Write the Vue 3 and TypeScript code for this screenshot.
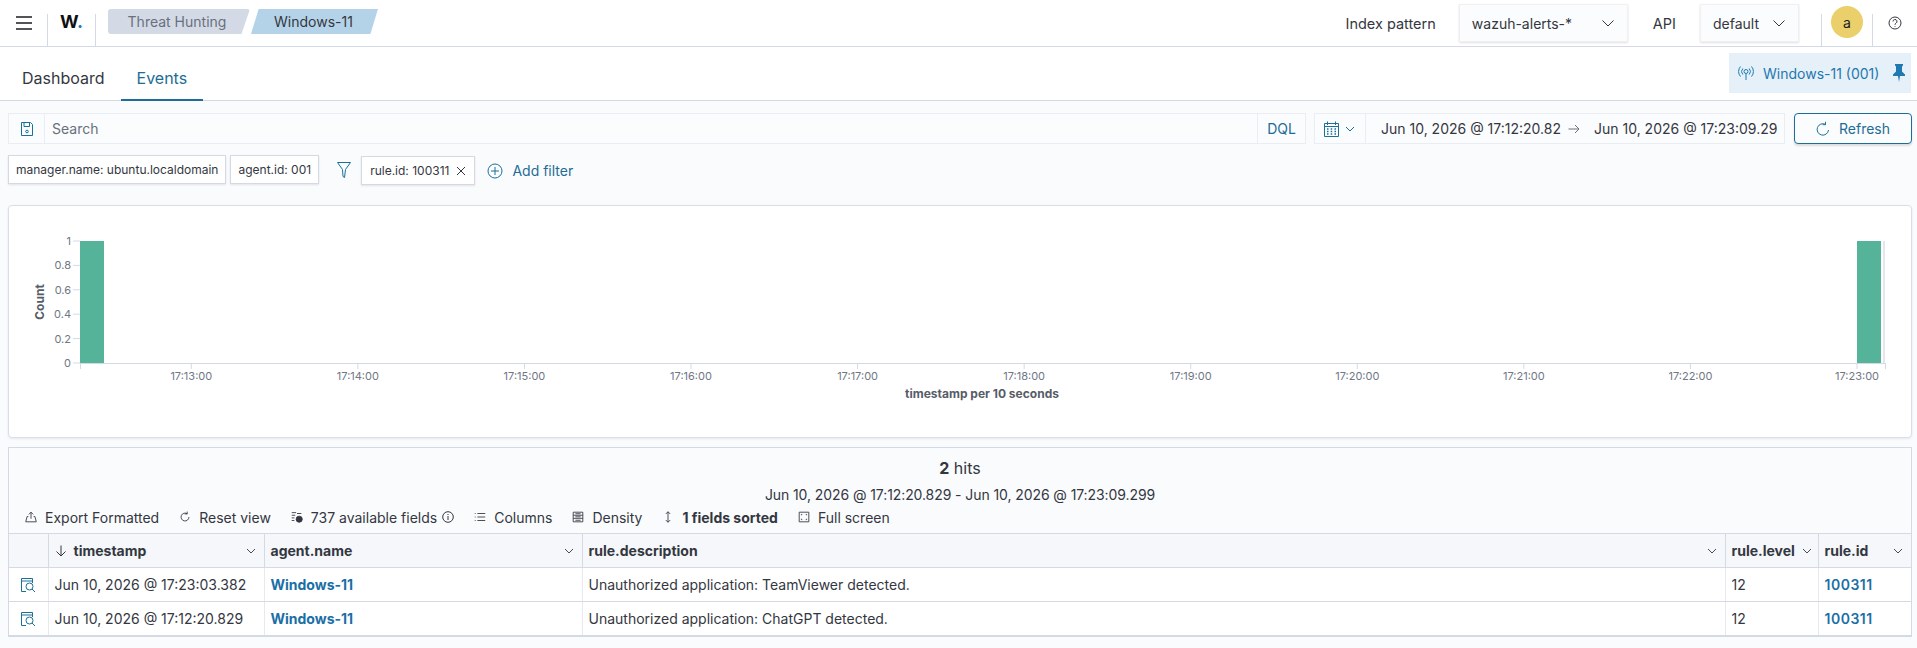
<script setup lang="ts">
const icons: Record<string, string> = {
  exportIcon: 'M8 10V2.500M5.500 5 8 2.500 10.500 5M5 7.500H3.500L2 13.500h12l-1.500-6H11',
  reset: 'M12.500 8a4.500 4.500 0 1 1-2-3.700M10.500 1.800v2.700h-2.700',
  fields: 'M2 3h5M2 6h4M2 9h3M2 12h3M8 4h5',
  columns: 'M5 4h9M5 8h9M5 12h9M2 4h1M2 8h1M2 12h1',
  density: 'M2.500 2.500h11v11h-11zM2.500 6h11M2.500 9.500h11M5 4.300h6M5 7.800h6M5 11.700h6',
  sort: 'M8 2v12M5.500 4.500 8 2l2.500 2.500M5.500 11.500 8 14l2.500-2.500',
  full: 'M2.500 2.500h11v11h-11zM5 5h1M10 5h1M5 11h1M10 11h1M5 5v1M11 5v1M5 10v1M11 10v1',
}

const toolbar = [
  { label: 'Export Formatted', icon: 'exportIcon' },
  { label: 'Reset view', icon: 'reset' },
  { label: '737 available fields', icon: 'fields', info: true },
  { label: 'Columns', icon: 'columns' },
  { label: 'Density', icon: 'density' },
  { label: '1 fields sorted', icon: 'sort', strong: true },
  { label: 'Full screen', icon: 'full' },
]

const columns = ['timestamp', 'agent.name', 'rule.description', 'rule.level', 'rule.id']

const rows = [
  { time: 'Jun 10, 2026 @ 17:23:03.382', agent: 'Windows-11', desc: 'Unauthorized application: TeamViewer detected.', level: 12, id: 100311 },
  { time: 'Jun 10, 2026 @ 17:12:20.829', agent: 'Windows-11', desc: 'Unauthorized application: ChatGPT detected.', level: 12, id: 100311 },
]

const xTicks = ['17:13:00', '17:14:00', '17:15:00', '17:16:00', '17:17:00', '17:18:00', '17:19:00', '17:20:00', '17:21:00', '17:22:00', '17:23:00']
  .map((label, i) => ({ label, x: 191.3 + i * 166.57 }))
const yTicks = ['1', '0.8', '0.6', '0.4', '0.2', '0'].map((label, i) => ({ label, y: 241 + i * 24.4 }))
</script>

<template>
  <div class="page">
    <header class="top">
      <button class="menu" aria-label="menu">
        <svg width="16" height="14" viewBox="0 0 16 14"><path d="M0 1h16M0 7h16M0 13h16" stroke="#1a1c21" stroke-width="1.500" /></svg>
      </button>
      <div class="logo"><span>W</span><i>.</i></div>
      <nav class="crumbs">
        <span class="crumb first">Threat Hunting</span>
        <span class="crumb second">Windows-11</span>
      </nav>
      <div class="top-right">
        <span class="top-label index-label">Index pattern</span>
        <div class="select index-select">
          <span>wazuh-alerts-*</span>
          <svg width="14" height="14" viewBox="0 0 14 14"><path d="M1.500 4.500 7 10l5.500-5.500" fill="none" stroke="#343741" stroke-width="1" /></svg>
        </div>
        <span class="top-label api-label">API</span>
        <div class="select api-select">
          <span>default</span>
          <svg width="14" height="14" viewBox="0 0 14 14"><path d="M1.500 4.500 7 10l5.500-5.500" fill="none" stroke="#343741" stroke-width="1" /></svg>
        </div>
        <div class="user-slot"><span class="avatar">a</span></div>
        <div class="help-slot">
          <svg width="14" height="14" viewBox="0 0 14 14" fill="none" stroke="#343741" stroke-width="1">
            <circle cx="7" cy="7" r="6" />
            <path d="M5 5.500a2 2 0 1 1 3 1.700c-.7.400-1 .8-1 1.600M7 10.300v.7" />
          </svg>
        </div>
      </div>
    </header>

    <div class="tabs">
      <a class="tab">Dashboard</a>
      <a class="tab active">Events</a>
      <div class="pinned">
        <svg width="18" height="16" viewBox="0 0 18 16" fill="none" stroke="#1f78b0" stroke-width="1">
          <circle cx="9" cy="6.500" r="2" />
          <path d="M9 8.500V15M5.800 3.500a4.500 4.500 0 0 0 0 6M12.200 3.500a4.500 4.500 0 0 1 0 6M3.500 1.500a7.500 7.500 0 0 0 0 10M14.500 1.500a7.500 7.500 0 0 1 0 10" />
        </svg>
        <span>Windows-11 (001)</span>
        <svg class="pin" width="12" height="18" viewBox="0 0 12 18"><path d="M2 0h8v1.500L9 2.500v5l3 3v1.500H7L6 18l-1-6H0v-1.500l3-3v-5l-1-1z" fill="#1f78b0" /></svg>
      </div>
    </div>

    <main class="content">
      <div class="query-row">
        <div class="search">
          <span class="save">
            <svg width="16" height="16" viewBox="0 0 16 16" fill="none" stroke="#1b7097" stroke-width="1">
              <path d="M2.500 1.500h9l2 2v11h-11z" />
              <path d="M5 1.500v4h5.500v-4" />
              <circle cx="8" cy="10.500" r="1.300" />
            </svg>
          </span>
          <span class="search-text">Search</span>
          <span class="dql">DQL</span>
        </div>
        <div class="dates">
          <span class="calendar">
            <svg width="15" height="16" viewBox="0 0 15 16" fill="none" stroke="#1b7097" stroke-width="1">
              <path d="M.5 2.500h14v13H.5zM.5 5.500h14M3.500 .5v3.500M11.500 .5v3.500" />
              <path d="M3 8h1.500M6.700 8h1.500M10.500 8H12M3 10.500h1.500M6.700 10.500h1.500M10.500 10.500H12M3 13h1.500M6.700 13h1.500M10.500 13H12" stroke-width="1.400" />
            </svg>
            <svg width="10" height="10" viewBox="0 0 10 10" fill="none" stroke="#1b7097"><path d="M1 3l4 4 4-4" /></svg>
          </span>
          <span class="date-text">Jun 10, 2026 @ 17:12:20.82</span>
          <svg class="date-arrow" width="12" height="10" viewBox="0 0 12 10" fill="none" stroke="#69707d"><path d="M.5 5h10.500M7 1l4 4-4 4" /></svg>
          <span class="date-text">Jun 10, 2026 @ 17:23:09.29</span>
        </div>
        <button class="refresh">
          <svg width="14" height="16" viewBox="0 0 14 16" fill="none" stroke="#1b7097" stroke-width="1">
            <path d="M12.500 9a5.700 5.700 0 1 1-3-5.600M9.500 .8v2.900H6.800" />
          </svg>
          <span>Refresh</span>
        </button>
      </div>

      <div class="filter-row">
        <span class="pill">manager.name: ubuntu.localdomain</span>
        <span class="pill">agent.id: 001</span>
        <svg class="funnel" width="14" height="16" viewBox="0 0 14 16" fill="none" stroke="#1b7097" stroke-width="1"><path d="M.5 .5h13L8.500 7.500l-1 8-1.500-1-.5-7z" /></svg>
        <span class="pill rule">rule.id: 100311
          <svg width="10" height="10" viewBox="0 0 10 10" stroke="#343741"><path d="M1 1l8 8M9 1 1 9" /></svg>
        </span>
        <a class="add-filter">
          <svg width="16" height="16" viewBox="0 0 16 16" fill="none" stroke="#1b7097" stroke-width="1"><circle cx="8" cy="8" r="7" /><path d="M8 4v8M4 8h8" /></svg>
          <span>Add filter</span>
        </a>
      </div>

      <section class="chart">
        <svg width="1904" height="233" viewBox="8 205 1904 233">
          <rect x="80" y="241" width="24" height="122" fill="#54b399" />
          <rect x="1857" y="241" width="24" height="122" fill="#54b399" />
          <rect x="1883" y="241" width="2" height="122" fill="#e3e6ec" />
          <path d="M80 363.500h1805" stroke="#d3dae6" />
          <path d="M80.500 363v6M1885.500 363v6" stroke="#d3dae6" />
          <g v-for="t in yTicks" :key="t.label">
            <path :d="`M73 ${t.y}h7`" stroke="#d3dae6" />
            <text class="tick" x="71" :y="t.y + 4" text-anchor="end">{{ t.label }}</text>
          </g>
          <g v-for="t in xTicks" :key="t.label">
            <path :d="`M${t.x} 363v6`" stroke="#d3dae6" />
            <text class="tick" :x="t.x" y="380" text-anchor="middle">{{ t.label }}</text>
          </g>
          <text class="axis-title" transform="translate(44 302) rotate(-90)" text-anchor="middle">Count</text>
          <text class="axis-title" x="982" y="398" text-anchor="middle">timestamp per 10 seconds</text>
        </svg>
      </section>

      <section class="results">
        <div class="hits"><b>2</b> hits</div>
        <div class="range">Jun 10, 2026 @ 17:12:20.829 - Jun 10, 2026 @ 17:23:09.299</div>
        <div class="toolbar">
          <span v-for="item in toolbar" :key="item.label" class="tool" :class="{ strong: item.strong }">
            <svg width="14" height="14" viewBox="0 0 16 16" fill="none" stroke="#343741" stroke-width="1"><path :d="icons[item.icon]" /><circle v-if="item.icon === 'fields'" cx="10.500" cy="10.500" r="3.500" fill="#343741" /></svg>
            {{ item.label }}
            <svg v-if="item.info" class="info" width="12" height="12" viewBox="0 0 12 12" fill="none" stroke="#343741"><circle cx="6" cy="6" r="5.300" /><path d="M6 5v4M6 3v1" /></svg>
          </span>
        </div>
        <table>
          <colgroup>
            <col style="width: 39px" />
            <col style="width: 216px" />
            <col style="width: 318px" />
            <col />
            <col style="width: 93px" />
            <col style="width: 93px" />
          </colgroup>
          <thead>
            <tr>
              <th></th>
              <th v-for="(col, i) in columns" :key="col">
                <div class="th-inner">
                  <svg v-if="i === 0" width="12" height="12" viewBox="0 0 12 12" fill="none" stroke="#343741"><path d="M6 .5V11M1.500 6.500 6 11l4.500-4.500" /></svg>
                  <span>{{ col }}</span>
                  <svg class="chev" width="10" height="10" viewBox="0 0 10 10" fill="none" stroke="#343741" stroke-width=".9"><path d="M1 3l4 4 4-4" /></svg>
                </div>
              </th>
            </tr>
          </thead>
          <tbody>
            <tr v-for="row in rows" :key="row.time">
              <td class="inspect">
                <svg width="16" height="16" viewBox="0 0 16 16" fill="none" stroke="#1b7097" stroke-width="1">
                  <path d="M6 14.500H1.500V1.500h11V6" />
                  <path d="M1.500 4h11" stroke-dasharray="1 1" stroke-width="2" />
                  <circle cx="9.500" cy="9.500" r="3.500" />
                  <path d="M12 12l3 3" />
                </svg>
              </td>
              <td>{{ row.time }}</td>
              <td><a class="link bold">{{ row.agent }}</a></td>
              <td>{{ row.desc }}</td>
              <td>{{ row.level }}</td>
              <td><a class="link semi">{{ row.id }}</a></td>
            </tr>
          </tbody>
        </table>
      </section>
    </main>
  </div>
</template>

<style>
html, body {
  margin: 0;
  background: #fafbfd;
}
</style>

<style scoped>
.page {
  width: 1917px;
  height: 648px;
  overflow: hidden;
  font-family: Inter, "Liberation Sans", sans-serif;
  font-size: 14px;
  color: #343741;
  background: #fafbfd;
}

.top {
  height: 46px;
  display: flex;
  align-items: stretch;
  background: #fff;
  border-bottom: 1px solid #d3dae6;
}

.menu {
  width: 47px;
  padding: 0;
  border: none;
  background: none;
  display: flex;
  align-items: center;
  justify-content: center;
}

.logo {
  width: 47px;
  margin-top: 14px;
  border-left: 1px solid #d3dae6;
  border-right: 1px solid #d3dae6;
  text-align: center;
  font-size: 18px;
  font-weight: 700;
  line-height: 16px;
  color: #0f1012;
}

.logo i {
  color: #1f78c8;
  font-style: normal;
}

.crumbs {
  display: flex;
  margin: 9px 0 0 12px;
  height: 25px;
}

.crumb {
  display: flex;
  align-items: center;
  justify-content: center;
  font-size: 14px;
}

.first {
  width: 142px;
  padding-right: 4px;
  box-sizing: border-box;
  background: #d3dae6;
  color: #69707d;
  border-radius: 3px;
  clip-path: polygon(0 0, 100% 0, 94% 100%, 0 100%);
}

.second {
  width: 127px;
  padding-right: 2px;
  box-sizing: border-box;
  margin-left: 1px;
  background: #b4d3e8;
  color: #343741;
  clip-path: polygon(6% 0, 100% 0, 94% 100%, 0 100%);
}

.top-right {
  margin-left: auto;
  display: flex;
  align-items: center;
}

.top-label {
  font-size: 14.500px;
}

.index-label {
  margin-right: 23px;
}

.api-label {
  margin: 0 24px 0 25px;
}

.select {
  height: 38px;
  box-sizing: border-box;
  display: flex;
  align-items: center;
  justify-content: space-between;
  padding: 0 12px;
  background: #fbfcfd;
  border: 1px solid #eef0f4;
  box-shadow: 0 1px 2px rgba(0, 0, 0, .12);
}

.index-select {
  width: 169px;
}

.api-select {
  width: 99px;
}

.user-slot {
  width: 50px;
  height: 32px;
  margin-top: 14px;
  margin-left: 22px;
  border-left: 1px solid #d3dae6;
  border-right: 1px solid #d3dae6;
  display: flex;
  justify-content: center;
}

.avatar {
  width: 32px;
  height: 32px;
  margin-top: -8px;
  border-radius: 50%;
  background: #ebcf6a;
  color: #1a1c21;
  display: flex;
  align-items: center;
  justify-content: center;
}

.help-slot {
  width: 44px;
  display: flex;
  justify-content: center;
}

.help-slot svg {
  align-self: center;
}

.tabs {
  height: 53px;
  display: flex;
  align-items: stretch;
  padding-left: 6px;
  background: #fff;
  border-bottom: 1px solid #d3dae6;
}

.tab {
  padding: 0 16px;
  line-height: 62px;
  font-size: 16px;
  color: #343741;
}

.active {
  color: #1d6d96;
  border-bottom: 2px solid #1d6d96;
  height: 52px;
}

.pinned {
  margin: 6px 6px 6px auto;
  width: 182px;
  height: 40px;
  padding: 0 6px 0 8px;
  box-sizing: border-box;
  display: flex;
  align-items: center;
  gap: 8px;
  background: #e6f0f8;
  color: #1f78b0;
}

.pin {
  margin-left: auto;
}

.content {
  padding: 12px 5px 0 8px;
}

.query-row {
  display: flex;
  gap: 8px;
  height: 31px;
}

.search,
.dates {
  display: flex;
  align-items: center;
  box-sizing: border-box;
  background: #fbfcfd;
  border: 1px solid #eaedf3;
}

.search {
  flex: 1;
}

.save {
  width: 35px;
  height: 100%;
  border-right: 1px solid #eaedf3;
  display: flex;
  align-items: center;
  justify-content: center;
}

.search-text {
  margin-left: 7px;
  color: #69707d;
}

.dql {
  margin-left: auto;
  height: 100%;
  width: 47px;
  border-left: 1px solid #eaedf3;
  display: flex;
  align-items: center;
  justify-content: center;
  color: #1d6d96;
}

.dates {
  width: 471px;
  margin-right: 1px;
  white-space: nowrap;
}

.calendar {
  width: 51px;
  height: 100%;
  box-sizing: border-box;
  padding-left: 9px;
  border-right: 1px solid #eaedf3;
  display: flex;
  align-items: center;
  gap: 6px;
  flex-shrink: 0;
}

.date-text {
  margin-left: 15px;
}

.date-arrow {
  margin-left: 7px;
  margin-right: -1px;
}

.refresh {
  width: 118px;
  padding: 0;
  font: inherit;
  display: flex;
  align-items: center;
  justify-content: center;
  gap: 9px;
  color: #1d6d96;
  background: #fbfcfd;
  border: 1px solid #1d6d96;
  border-radius: 4px;
  box-shadow: 0 2px 2px rgba(0, 0, 0, .12);
}

.filter-row {
  display: flex;
  align-items: flex-start;
  margin-top: 11px;
  height: 30px;
  font-size: 12px;
}

.pill {
  height: 29px;
  padding: 0 7px;
  display: flex;
  align-items: center;
  box-sizing: border-box;
  margin-right: 4px;
  background: #fff;
  border: 1px solid #d3dae6;
  box-shadow: 0 1px 2px rgba(0, 0, 0, .1);
  white-space: nowrap;
}

.funnel {
  margin: 7px 10px 0 14px;
}

.rule {
  margin-top: 1px;
  padding: 0 8px;
  gap: 7px;
}

.add-filter {
  margin-left: 8px;
  margin-top: 7px;
  display: flex;
  align-items: center;
  gap: 9px;
  color: #1d6d96;
  font-size: 14px;
}

.chart {
  margin-top: 20px;
  height: 233px;
  box-sizing: border-box;
  background: #fff;
  border: 1px solid #d9dee8;
  border-radius: 4px;
  box-shadow: 0 1px 3px rgba(0, 0, 0, .08);
  overflow: hidden;
}

.chart svg {
  display: block;
  margin: -1px;
}

.tick {
  font-size: 11px;
  fill: #6f7785;
}

.axis-title {
  font-size: 12px;
  font-weight: 700;
  fill: #565c68;
}

.results {
  margin-top: 9px;
  border: 1px solid #d3dae6;
  background: #fafbfd;
}

.hits {
  margin-top: 10px;
  line-height: 20px;
  text-align: center;
  font-size: 16px;
}

.range {
  margin-top: 7px;
  line-height: 20px;
  text-align: center;
  letter-spacing: -.085px;
}

.toolbar {
  display: flex;
  align-items: center;
  height: 20px;
  margin-top: 2px;
  margin-bottom: 6px;
  padding-left: 15px;
  gap: 19px;
}

.tool {
  display: flex;
  align-items: center;
  gap: 7px;
  white-space: nowrap;
}

.tool .info {
  margin-left: -2px;
}

.strong {
  font-weight: 700;
}

table {
  width: 100%;
  table-layout: fixed;
  border-collapse: collapse;
  background: #fff;
}

th,
td {
  height: 34px;
  padding: 0 0 0 6px;
  box-sizing: border-box;
  border-left: 1px solid #e6e9f0;
  border-bottom: 1px solid #d3dae6;
  text-align: left;
}

th:first-child,
td:first-child {
  border-left: none;
}

thead tr {
  background: #f5f7fa;
  border-top: 1px solid #d3dae6;
}

th {
  border-left-color: #d3dae6;
}

.th-inner {
  display: flex;
  align-items: center;
  gap: 7px;
  padding-right: 8px;
}

.chev {
  margin-left: auto;
  flex-shrink: 0;
}

.inspect {
  padding: 0 1px 0 0;
  text-align: center;
}

.inspect svg {
  display: block;
  margin: 1px auto 0;
}

.link {
  color: #1a6fa6;
}

.bold {
  font-weight: 700;
}

.semi {
  font-weight: 600;
  letter-spacing: .5px;
}
</style>
